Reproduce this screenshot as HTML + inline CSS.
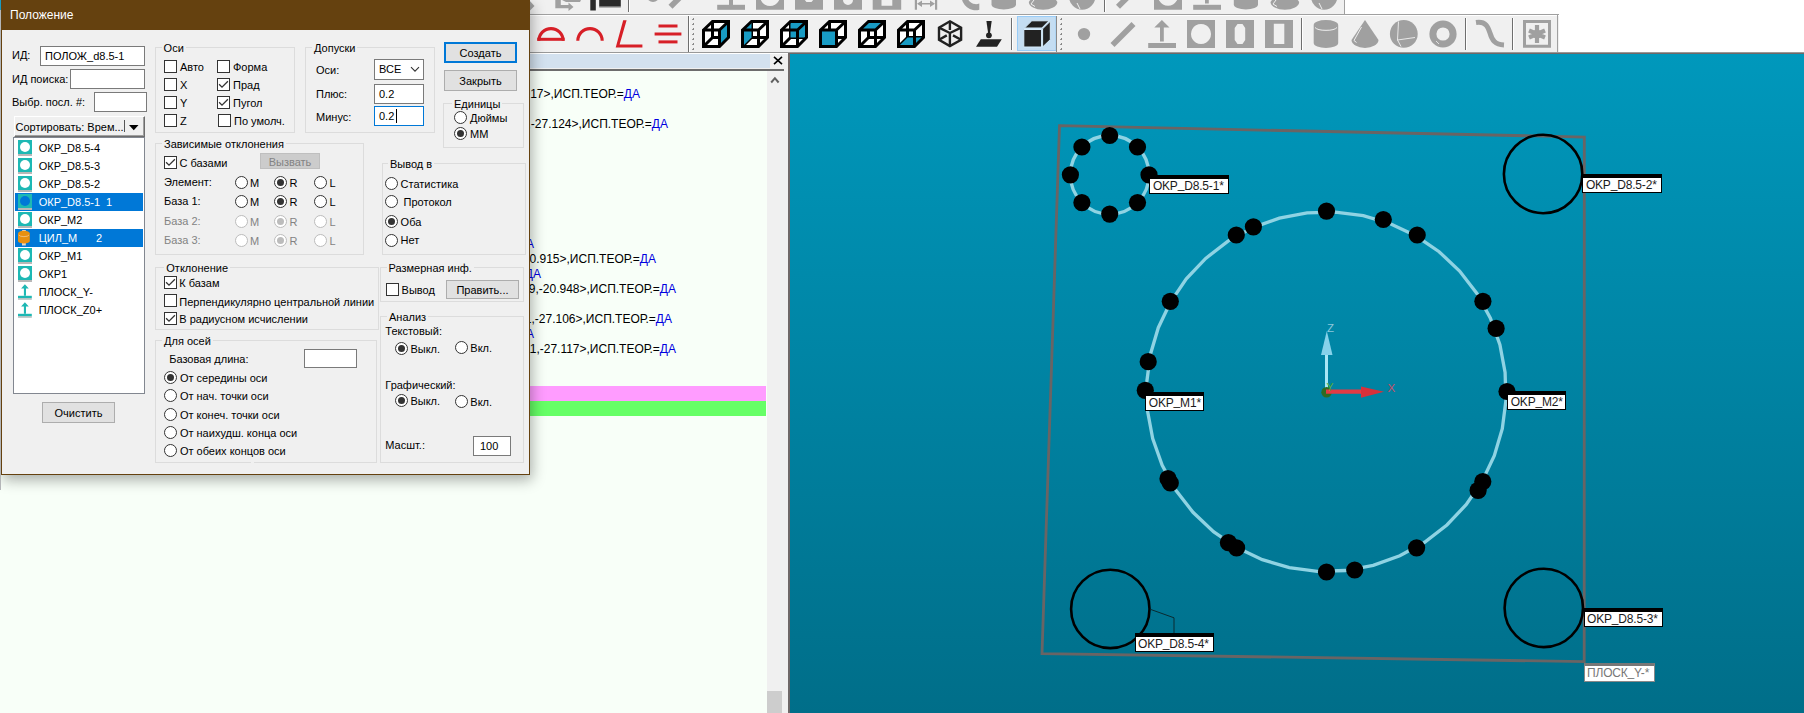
<!DOCTYPE html>
<html><head><meta charset="utf-8">
<style>
*{box-sizing:border-box;margin:0;padding:0}
html,body{width:1804px;height:713px;overflow:hidden;background:#fff;font-family:"Liberation Sans",sans-serif;font-size:11px;color:#000}
.a{position:absolute}
.t{position:absolute;white-space:nowrap;line-height:13px}
.gb{position:absolute;border:1px solid #dcdcdc}
.gl{position:absolute;white-space:nowrap;line-height:13px;background:#f0f0f0;padding:0 2px}
.inp{position:absolute;background:#fff;border:1px solid #7a7a7a}
.btn{position:absolute;background:#e1e1e1;border:1px solid #adadad;text-align:center;line-height:19px;padding-top:1px}
.cb{position:absolute;width:13px;height:13px;border:1px solid #333;background:#fff}
.rb{position:absolute;width:13px;height:13px;border:1px solid #333;background:#fff;border-radius:50%}
.rb.on::after{content:"";position:absolute;left:2px;top:2px;width:7px;height:7px;border-radius:50%;background:#333}
.rb.dis{border-color:#bcbcbc}
.rb.dis.on::after{background:#bcbcbc}
.dis{color:#838383}
.rpt{position:absolute;white-space:nowrap;font-size:12px;line-height:15px;text-align:right}
.da{color:#0000e0}
.lbl{position:absolute;background:#fff;border:1px solid #000;border-top:4px solid #000;font-size:12px;letter-spacing:-0.18px;line-height:13px;padding-left:2.5px;padding-top:1px;white-space:nowrap;color:#111}
</style></head><body>

<div class="a" style="left:0;top:0;width:1345px;height:14px;background:#f0f0f0"></div>
<div class="a" style="left:0;top:14px;width:1559px;height:1px;background:#a0a0a0"></div>
<div class="a" style="left:1344px;top:0;width:1px;height:14px;background:#a0a0a0"></div>
<div class="a" style="left:0;top:15px;width:1559px;height:38px;background:#f0f0f0;border-top:1px solid #fff"></div>
<div class="a" style="left:1557px;top:15px;width:1px;height:38px;background:#a0a0a0"></div>
<div class="a" style="left:0;top:52px;width:1804px;height:1px;background:#999"></div>
<svg class="a" style="left:0;top:0" width="1804" height="54" viewBox="0 0 1804 54">
<path d="M703.5 30 L712.5 21.5 H728.5 V37.5 L719.5 46.5 H703.5 Z" fill="#fff"/><path d="M712.5 21.5 V37.5 H728.5 M712.5 37.5 L703.5 46.5" fill="none" stroke="#000" stroke-width="3"/><path d="M719.5 30 L728.5 21.5 L728.5 37.5 L719.5 46.5 Z" fill="#189bc4"/><path d="M703.5 30 L712.5 21.5 H728.5 V37.5 L719.5 46.5 H703.5 Z M703.5 30 H719.5 V46.5 M719.5 30 L728.5 21.5" fill="none" stroke="#000" stroke-width="3" stroke-linejoin="miter"/>
<path d="M742.5 30 L751.5 21.5 H767.5 V37.5 L758.5 46.5 H742.5 Z" fill="#fff"/><path d="M751.5 21.5 V37.5 H767.5 M751.5 37.5 L742.5 46.5" fill="none" stroke="#000" stroke-width="3"/><path d="M742.5 30 L751.5 21.5 L751.5 37.5 L742.5 46.5 Z" fill="#189bc4"/><path d="M742.5 30 L751.5 21.5 H767.5 V37.5 L758.5 46.5 H742.5 Z M742.5 30 H758.5 V46.5 M758.5 30 L767.5 21.5" fill="none" stroke="#000" stroke-width="3" stroke-linejoin="miter"/>
<path d="M781.5 30 L790.5 21.5 H806.5 V37.5 L797.5 46.5 H781.5 Z" fill="#fff"/><path d="M790.5 21.5 V37.5 H806.5 M790.5 37.5 L781.5 46.5" fill="none" stroke="#000" stroke-width="3"/><path d="M790.5 21.5 H806.5 V37.5 H790.5 Z" fill="#189bc4"/><path d="M781.5 30 L790.5 21.5 H806.5 V37.5 L797.5 46.5 H781.5 Z M781.5 30 H797.5 V46.5 M797.5 30 L806.5 21.5" fill="none" stroke="#000" stroke-width="3" stroke-linejoin="miter"/>
<path d="M820.5 30 L829.5 21.5 H845.5 V37.5 L836.5 46.5 H820.5 Z" fill="#fff"/><path d="M829.5 21.5 V37.5 H845.5 M829.5 37.5 L820.5 46.5" fill="none" stroke="#000" stroke-width="3"/><path d="M820.5 30 H836.5 V46.5 H820.5 Z" fill="#189bc4"/><path d="M820.5 30 L829.5 21.5 H845.5 V37.5 L836.5 46.5 H820.5 Z M820.5 30 H836.5 V46.5 M836.5 30 L845.5 21.5" fill="none" stroke="#000" stroke-width="3" stroke-linejoin="miter"/>
<path d="M859.5 30 L868.5 21.5 H884.5 V37.5 L875.5 46.5 H859.5 Z" fill="#fff"/><path d="M868.5 21.5 V37.5 H884.5 M868.5 37.5 L859.5 46.5" fill="none" stroke="#000" stroke-width="3"/><path d="M859.5 30 L868.5 21.5 H884.5 L875.5 30 Z" fill="#189bc4"/><path d="M859.5 30 L868.5 21.5 H884.5 V37.5 L875.5 46.5 H859.5 Z M859.5 30 H875.5 V46.5 M875.5 30 L884.5 21.5" fill="none" stroke="#000" stroke-width="3" stroke-linejoin="miter"/>
<path d="M898.5 30 L907.5 21.5 H923.5 V37.5 L914.5 46.5 H898.5 Z" fill="#fff"/><path d="M907.5 21.5 V37.5 H923.5 M907.5 37.5 L898.5 46.5" fill="none" stroke="#000" stroke-width="3"/><path d="M898.5 46.5 L907.5 37.5 H923.5 L914.5 46.5 Z" fill="#189bc4"/><path d="M898.5 30 L907.5 21.5 H923.5 V37.5 L914.5 46.5 H898.5 Z M898.5 30 H914.5 V46.5 M914.5 30 L923.5 21.5" fill="none" stroke="#000" stroke-width="3" stroke-linejoin="miter"/>
<path d="M538.8 40.8 A12.2 12.2 0 0 1 563.2 40.8" fill="none" stroke="#d71f27" stroke-width="3.1"/><rect x="537.3" y="37.8" width="27.2" height="3" fill="#d71f27"/>
<path d="M577.8 40.8 A12.2 12.2 0 0 1 602.2 40.8" fill="none" stroke="#d71f27" stroke-width="3.1"/>
<path d="M623.2 20.2 L626.6 20.2 L619.6 44.6 L642.4 44.6 L642.4 47.4 L615.7 47.4 Z" fill="#d71f27"/>
<rect x="658.5" y="24.5" width="19" height="3" fill="#d71f27"/><rect x="654.6" y="32.5" width="26.8" height="3" fill="#d71f27"/><rect x="658.5" y="40.4" width="19" height="3" fill="#d71f27"/>
<rect x="688" y="16" width="1" height="36" fill="#6e6e6e"/><rect x="689" y="16" width="1" height="36" fill="#fff"/>
<rect x="692" y="19" width="2" height="1" fill="#999"/><rect x="693" y="18" width="1" height="2" fill="#888"/><rect x="692" y="24" width="2" height="1" fill="#999"/><rect x="693" y="23" width="1" height="2" fill="#888"/><rect x="692" y="29" width="2" height="1" fill="#999"/><rect x="693" y="28" width="1" height="2" fill="#888"/><rect x="692" y="34" width="2" height="1" fill="#999"/><rect x="693" y="33" width="1" height="2" fill="#888"/><rect x="692" y="39" width="2" height="1" fill="#999"/><rect x="693" y="38" width="1" height="2" fill="#888"/><rect x="692" y="44" width="2" height="1" fill="#999"/><rect x="693" y="43" width="1" height="2" fill="#888"/><rect x="692" y="49" width="2" height="1" fill="#999"/><rect x="693" y="48" width="1" height="2" fill="#888"/>
<rect x="628" y="0" width="1" height="12" fill="#6e6e6e"/><rect x="629" y="0" width="1" height="12" fill="#fff"/>
<g fill="none" stroke="#222" stroke-width="2.4" stroke-linejoin="miter"><path d="M949.9 21.3 L961.1 27.7 L961.1 39.8 L949.9 46 L939 39.8 L939 27.7 Z"/><path d="M939 27.7 L949.9 33 L961.1 27.7 M949.9 33 V46 M949.9 21.3 V30 M939 39.8 L946.8 35.4 M961.1 39.8 L953 35.4"/></g>
<path d="M986.4 21 H991.7 L990 33 H988.1 Z" fill="#222"/><circle cx="988.9" cy="35.3" r="2.9" fill="#222"/><path d="M976 46.7 L980.8 39.2 H1001.8 L997 46.7 Z" fill="#222"/>
<rect x="1011" y="18" width="1" height="32" fill="#6e6e6e"/><rect x="1012" y="18" width="1" height="32" fill="#fff"/>
<rect x="1017.5" y="16.5" width="38.5" height="34" fill="#c4ddf2" stroke="#99ccf7" stroke-width="1"/>
<rect x="1056" y="16" width="1" height="36" fill="#8a8a8a"/>
<g fill="#222" stroke="#d6ecfb" stroke-width="1"><path d="M1023.8 29.5 H1041.6 V47 H1023.8 Z"/><path d="M1024.5 28 L1031.8 20.8 H1049 L1041.8 28 Z"/><path d="M1042.6 28.8 L1050.3 21.2 V39.6 L1042.6 47 Z"/></g>
<rect x="1060" y="19" width="2" height="1" fill="#999"/><rect x="1061" y="18" width="1" height="2" fill="#888"/><rect x="1060" y="24" width="2" height="1" fill="#999"/><rect x="1061" y="23" width="1" height="2" fill="#888"/><rect x="1060" y="29" width="2" height="1" fill="#999"/><rect x="1061" y="28" width="1" height="2" fill="#888"/><rect x="1060" y="34" width="2" height="1" fill="#999"/><rect x="1061" y="33" width="1" height="2" fill="#888"/><rect x="1060" y="39" width="2" height="1" fill="#999"/><rect x="1061" y="38" width="1" height="2" fill="#888"/><rect x="1060" y="44" width="2" height="1" fill="#999"/><rect x="1061" y="43" width="1" height="2" fill="#888"/><rect x="1060" y="49" width="2" height="1" fill="#999"/><rect x="1061" y="48" width="1" height="2" fill="#888"/>
<g transform="translate(0,0)" fill="#a0a0a0"><circle cx="1084" cy="34.1" r="6.2"/><path d="M1110.5 43 L1131.5 22 L1135.5 26 L1114.5 47 Z"/><path d="M1161.9 20 L1169.5 27.4 H1163.8 V41.6 H1160 V27.4 H1154.3 Z"/><rect x="1148.2" y="43" width="27.8" height="5"/><path fill-rule="evenodd" d="M1187 20 H1215 V48 H1187 Z M1201 24 A10 10 0 1 0 1201.01 24 Z"/><path fill-rule="evenodd" d="M1226 20 H1254 V48 H1226 Z M1237.5 24.1 H1242.5 L1245.2 28 V40 L1242.5 44.1 H1237.5 L1234.7 40 V28 Z"/><path fill-rule="evenodd" d="M1265 20 H1293 V48 H1265 Z M1273.8 23.8 H1284.3 V44.1 H1273.8 Z"/></g>
<g fill="#a0a0a0"><circle cx="653" cy="-4.1" r="6.2"/><path d="M668.5 4.8 L689.5 -16.2 L693.5 -12.2 L672.5 8.8 Z"/><path d="M729 -6 H733 V5 H729 Z"/><rect x="717.2" y="4.8" width="27.8" height="5"/><path fill-rule="evenodd" d="M756 -18 H784 V9.7 H756 Z M770 -14 A10 10 0 1 0 770.01 -14 Z"/><path fill-rule="evenodd" d="M795 -18 H823 V9.7 H795 Z M804 -14 H814 V-1 L811.5 2 H806.5 L804 -1 Z"/><path fill-rule="evenodd" d="M834 -18 H862 V9.7 H834 Z M843 -14 H853 V0 A5 5 0 0 1 843 0 Z"/></g>
<rect x="1301" y="18" width="1" height="32" fill="#6e6e6e"/><rect x="1302" y="18" width="1" height="32" fill="#fff"/>
<g fill="#a0a0a0"><path d="M1313.7 25 A12.25 5 0 0 1 1338.2 25 V43 A12.25 5 0 0 1 1313.7 43 Z"/></g>
<path d="M1315 27.5 A11.5 4 0 0 0 1337 27.5" fill="none" stroke="#f0f0f0" stroke-width="1"/>
<path d="M1365 20 L1378.5 40 A13.5 7.9 0 0 1 1351.5 40 Z" fill="#a0a0a0"/><path d="M1361.5 27 L1354 40.5 L1356.5 42.5" fill="none" stroke="#f0f0f0" stroke-width="1"/>
<circle cx="1403.8" cy="33.9" r="13.9" fill="#a0a0a0"/><path d="M1398.5 21.5 L1397.5 40 L1415 37.5 M1397.5 40 L1401 46.5" fill="none" stroke="#f0f0f0" stroke-width="0.9"/>
<circle cx="1443" cy="34" r="10.1" fill="none" stroke="#a0a0a0" stroke-width="7"/><path d="M1436 41 L1439 44" stroke="#f0f0f0" stroke-width="0.8"/>
<rect x="1465" y="18" width="1" height="32" fill="#6e6e6e"/><rect x="1466" y="18" width="1" height="32" fill="#fff"/>
<path d="M1476 22.5 C1486 21 1488 27 1490 33 C1492 40 1495 44.5 1504 45" fill="none" stroke="#a0a0a0" stroke-width="5"/>
<rect x="1512" y="18" width="1" height="32" fill="#6e6e6e"/><rect x="1513" y="18" width="1" height="32" fill="#fff"/>
<path fill-rule="evenodd" d="M1523 20 H1551 V47.7 H1523 Z M1526 23 V44.7 H1548 V23 Z" fill="#a0a0a0"/>
<g stroke="#a0a0a0" stroke-width="4.2"><path d="M1537 25 V43"/><path d="M1529 30.5 L1545 37.5 M1545 30.5 L1529 37.5"/></g><circle cx="1537" cy="34" r="4.5" fill="#a0a0a0"/>
<g fill="#a0a0a0"><path d="M529 0 L534.5 6 L529 11.5 Z"/><path d="M555.3 0 H560.8 V5 H568.5 V2.5 L573.5 7 L568.5 11 V8.3 H555.3 Z"/><path d="M563 0 H581 L580 2 H566 L562 0 Z"/><path fill-rule="evenodd" d="M872.7 -18 H901.2 V9.7 H872.7 Z M881.5 -10 H892.3 V5.8 H881.5 Z"/><path d="M914.8 -2 H917 V9.7 H914.8 Z M935 -2 H937.2 V9.7 H935 Z M917 3.8 L922 0.5 V3 H930 V0.5 L935 3.8 L930 7 V4.6 H922 V7 Z"/><path d="M961.6 -4 A14 14 0 0 0 979.3 9.7 V3.5 A9 9 0 0 1 967 -4 Z"/><path d="M991.5 -10 V4.5 A12.25 5 0 0 0 1016 4.5 V-10 Z"/><path d="M1028.8 2 A14.3 7.7 0 0 0 1057.4 2 L1043 -18 Z"/><circle cx="1082.2" cy="-3.5" r="13.2"/></g>
<path d="M1034 0 L1031 4 L1035 6.5" fill="none" stroke="#f0f0f0" stroke-width="1"/><path d="M1072 -1 L1092 -1 M1077 3 L1080 9" fill="none" stroke="#f0f0f0" stroke-width="1"/>
<g fill="#a0a0a0"><path d="M1233.8 -10 V4.5 A12.1 5 0 0 0 1258 4.5 V-10 Z"/><path d="M1270.5 2 A14.35 7.7 0 0 0 1299.2 2 L1285 -18 Z"/><circle cx="1324.2" cy="-3.5" r="13.2"/></g>
<path d="M1276 0 L1273 4 L1277 6.5" fill="none" stroke="#f0f0f0" stroke-width="1"/><path d="M1314 -1 L1334 -1 M1319 3 L1322 9" fill="none" stroke="#f0f0f0" stroke-width="1"/>
<rect x="1104" y="0" width="1" height="12" fill="#6e6e6e"/><rect x="1105" y="0" width="1" height="12" fill="#fff"/>
<g fill="#a0a0a0"><g transform="translate(5.5,-38.2)"><path d="M1110.5 43 L1131.5 22 L1135.5 26 L1114.5 47 Z"/></g><g transform="translate(-33,-38.2)"><path fill-rule="evenodd" d="M1187 20 H1215 V48 H1187 Z M1201 24 A10 10 0 1 0 1201.01 24 Z"/></g><g transform="translate(45,-38.2)"><path d="M1161.9 20 L1169.5 27.4 H1163.8 V41.6 H1160 V27.4 H1154.3 Z"/><rect x="1148.2" y="43" width="27.8" height="5"/></g></g>
<rect x="590.3" y="0" width="5.5" height="10.5" fill="#2a2a2a"/><rect x="599.2" y="0" width="21.6" height="6.7" fill="#2a2a2a"/><rect x="599.2" y="6.7" width="21.6" height="1" fill="#999"/>
</svg>
<div class="a" style="left:0;top:53px;width:790px;height:660px;background:#f0f0f0;border-top:1px solid #fff"></div>
<div class="a" style="left:0;top:54px;width:770px;height:14px;background:#d3e1ef"></div>
<div class="a" style="left:0;top:69px;width:784px;height:2px;background:#6d6d6d"></div>
<div class="a" style="left:0;top:71px;width:767px;height:642px;background:#f8fff8"></div>
<div class="a" style="left:788px;top:53px;width:1016px;height:660px;background:#6f6868"></div>
<svg class="a" style="left:773px;top:56px" width="10" height="9"><path d="M1 0.8 L9 8.2 M9 0.8 L1 8.2" stroke="#000" stroke-width="1.6"/></svg>
<svg class="a" style="left:770px;top:76px" width="10" height="8"><path d="M1.2 6.5 L4.9 2.2 L8.6 6.5" fill="none" stroke="#606060" stroke-width="2"/></svg>
<div class="a" style="left:767px;top:691px;width:15px;height:22px;background:#cdcdcd"></div>
<div class="rpt" style="right:1164px;top:87.3px">ИСП.ТЕОР.=ИСП.ТЕОР.=<0.000,-20.917>,ИСП.ТЕОР.=<span class="da">ДА</span></div>
<div class="rpt" style="right:1136px;top:117.3px"><0.000,-20.917>,<0.000,-27.124>,ИСП.ТЕОР.=<span class="da">ДА</span></div>
<div class="rpt" style="right:1270px;top:237.3px">ИСП.ТЕОР.=<span class="da">ДА</span></div>
<div class="rpt" style="right:1148px;top:252.3px">ИСП.ТЕОР.=<0.000,-20.915>,ИСП.ТЕОР.=<span class="da">ДА</span></div>
<div class="rpt" style="right:1263px;top:267.3px">ИСП.ТЕОР.=<span class="da">ДА</span></div>
<div class="rpt" style="right:1128px;top:282.3px">ИСП.ТЕОР.=<0.000,-26.919,-20.948>,ИСП.ТЕОР.=<span class="da">ДА</span></div>
<div class="rpt" style="right:1132px;top:312.3px">ИСП.ТЕОР.=<0.000,-26.911,-27.106>,ИСП.ТЕОР.=<span class="da">ДА</span></div>
<div class="rpt" style="right:1270px;top:327.3px">ИСП.ТЕОР.=<span class="da">ДА</span></div>
<div class="rpt" style="right:1128px;top:342.3px">ИСП.ТЕОР.=<0.000,-26.911,-27.117>,ИСП.ТЕОР.=<span class="da">ДА</span></div>
<div class="a" style="left:0;top:386px;width:766px;height:14.5px;background:#ff9cff"></div>
<div class="a" style="left:0;top:400.5px;width:766px;height:15.5px;background:#66ff66"></div>
<div class="a" style="left:790px;top:54px;width:1014px;height:659px;background:linear-gradient(#0098bc,#006e89)"></div>
<svg class="a" style="left:0;top:0" width="1804" height="713" viewBox="0 0 1804 713">
<path d="M1059.5 125.7 L1584.3 137 L1584.2 661.6 L1042 653.6 Z" fill="none" stroke="#6a6464" stroke-width="2.8" stroke-linejoin="miter"/>
<polygon points="1505.9,400.7 1502.3,428.7 1494.3,455.7 1482.2,481.2 1466.3,504.5 1446.9,525.0 1424.6,542.3 1399.8,555.8 1373.2,565.3 1345.5,570.5 1317.3,571.3 1289.3,567.7 1262.3,559.7 1236.8,547.6 1213.5,531.7 1193.0,512.3 1175.7,490.0 1162.2,465.2 1152.7,438.6 1147.5,410.9 1146.7,382.7 1150.3,354.7 1158.3,327.7 1170.4,302.2 1186.3,278.9 1205.7,258.4 1228.0,241.1 1252.8,227.6 1279.4,218.1 1307.1,212.9 1335.3,212.1 1363.3,215.7 1390.3,223.7 1415.8,235.8 1439.1,251.7 1459.6,271.1 1476.9,293.4 1490.4,318.2 1499.9,344.8 1505.1,372.5" fill="none" stroke="#8fd3e3" stroke-width="3.3"/>
<circle cx="1109.7" cy="174.8" r="39.3" fill="none" stroke="#8fd3e3" stroke-width="3.3"/>
<circle cx="1543.1" cy="174" r="39.2" fill="none" stroke="#000" stroke-width="2.6"/>
<circle cx="1110.3" cy="608.9" r="39.2" fill="none" stroke="#000" stroke-width="2.6"/>
<circle cx="1543.8" cy="607.9" r="39.2" fill="none" stroke="#000" stroke-width="2.6"/>
<path d="M1150.3 609.3 L1174 617.8 L1174 633" fill="none" stroke="#0a2a30" stroke-width="1"/>
<circle cx="1326.5" cy="211.1" r="8.6" fill="#000"/>
<circle cx="1383.3" cy="219.5" r="8.6" fill="#000"/>
<circle cx="1417.2" cy="235" r="8.6" fill="#000"/>
<circle cx="1482.9" cy="301.3" r="8.6" fill="#000"/>
<circle cx="1496.1" cy="328.4" r="8.6" fill="#000"/>
<circle cx="1507" cy="391.5" r="8.6" fill="#000"/>
<circle cx="1482.8" cy="481.6" r="8.6" fill="#000"/>
<circle cx="1478.1" cy="490.4" r="8.6" fill="#000"/>
<circle cx="1416.6" cy="547.8" r="8.6" fill="#000"/>
<circle cx="1354.7" cy="570" r="8.6" fill="#000"/>
<circle cx="1326.5" cy="572" r="8.6" fill="#000"/>
<circle cx="1236.6" cy="547.9" r="8.6" fill="#000"/>
<circle cx="1228.4" cy="542.6" r="8.6" fill="#000"/>
<circle cx="1170.3" cy="483" r="8.6" fill="#000"/>
<circle cx="1168" cy="478.7" r="8.6" fill="#000"/>
<circle cx="1145.3" cy="390.3" r="8.6" fill="#000"/>
<circle cx="1148.2" cy="361.7" r="8.6" fill="#000"/>
<circle cx="1170.3" cy="301.3" r="8.6" fill="#000"/>
<circle cx="1236.3" cy="235" r="8.6" fill="#000"/>
<circle cx="1253.4" cy="226.8" r="8.6" fill="#000"/>
<circle cx="1149.0" cy="174.8" r="8.6" fill="#000"/>
<circle cx="1137.5" cy="202.6" r="8.6" fill="#000"/>
<circle cx="1109.7" cy="214.1" r="8.6" fill="#000"/>
<circle cx="1081.9" cy="202.6" r="8.6" fill="#000"/>
<circle cx="1070.4" cy="174.8" r="8.6" fill="#000"/>
<circle cx="1081.9" cy="147.0" r="8.6" fill="#000"/>
<circle cx="1109.7" cy="135.5" r="8.6" fill="#000"/>
<circle cx="1137.5" cy="147.0" r="8.6" fill="#000"/>
<line x1="1326.5" y1="392" x2="1326.5" y2="352" stroke="#a8e6f5" stroke-width="3"/>
<path d="M1326.8 331 L1332.5 355 L1321 355 Z" fill="#86d2ea"/>
<circle cx="1326.6" cy="392.3" r="5.3" fill="#2f6a22"/>
<line x1="1326" y1="391.6" x2="1362" y2="391.6" stroke="#e33a44" stroke-width="4.2"/>
<path d="M1384 391.8 L1361 386.4 L1361 397.7 Z" fill="#d8303a"/>
<text x="1327" y="331.5" font-family="Liberation Sans" font-size="11.5" fill="#8cc8dc">Z</text>
<text x="1387.5" y="392" font-family="Liberation Sans" font-size="11.5" fill="#c85068">X</text>
<text x="1326.5" y="391" font-family="Liberation Sans" font-size="10.5" fill="#5cb030">Y</text>
</svg>
<div class="lbl" style="left:1149.4px;top:174.8px;width:79.2px;height:19px;border-color:#000;border-top:4px solid #000;color:#1a1a1a">OKP<span style="position:relative;top:-1.5px">_</span>D8.5-1*</div>
<div class="lbl" style="left:1582.4px;top:174px;width:79.2px;height:19px;border-color:#000;border-top:4px solid #000;color:#1a1a1a">OKP<span style="position:relative;top:-1.5px">_</span>D8.5-2*</div>
<div class="lbl" style="left:1134.5px;top:633px;width:79.2px;height:19px;border-color:#000;border-top:4px solid #000;color:#1a1a1a">OKP<span style="position:relative;top:-1.5px">_</span>D8.5-4*</div>
<div class="lbl" style="left:1583.5px;top:608.3px;width:79px;height:19px;border-color:#000;border-top:4px solid #000;color:#1a1a1a">OKP<span style="position:relative;top:-1.5px">_</span>D8.5-3*</div>
<div class="lbl" style="left:1583.5px;top:663px;width:71px;height:19px;border-color:#888;border-top:3px solid #777;color:#777">ПЛОСК<span style="position:relative;top:-1.5px">_</span>Y-*</div>
<div class="lbl" style="left:1145.3px;top:391.5px;width:58.6px;height:19px;border-color:#000;border-top:4px solid #000;color:#1a1a1a">OKP<span style="position:relative;top:-1.5px">_</span>M1*</div>
<div class="lbl" style="left:1507.2px;top:391.1px;width:58.6px;height:19px;border-color:#000;border-top:4px solid #000;color:#1a1a1a">OKP<span style="position:relative;top:-1.5px">_</span>M2*</div>
<div class="a" style="left:1px;top:0;width:529px;height:475px;background:#f0f0f0;border:1px solid #65410f;box-shadow:2px 5px 13px rgba(0,0,0,0.32)"></div>
<div class="a" style="left:1px;top:0;width:529px;height:30px;background:#65410f"></div>
<div class="t" style="left:10px;top:8px;font-size:12px;color:#fff;line-height:14px">Положение</div>
<div class="t " style="left:12px;top:49px;">ИД:</div>
<div class="t " style="left:12px;top:73px;">ИД поиска:</div>
<div class="t " style="left:12px;top:96px;">Выбр. посл. #:</div>
<div class="inp" style="left:40px;top:46px;width:105px;height:20px"></div>
<div class="t " style="left:45px;top:50px;">ПОЛОЖ_d8.5-1</div>
<div class="inp" style="left:70px;top:69px;width:75px;height:20px"></div>
<div class="inp" style="left:94px;top:92px;width:53px;height:20px"></div>
<div class="a" style="left:14px;top:116px;width:131px;height:21px;background:#f0f0f0;border:1px solid;border-color:#fff #6d6d6d #6d6d6d #fff;box-shadow:inset -1px -1px 0 #a0a0a0"></div>
<div class="t " style="left:15.5px;top:121px;">Сортировать: Врем...</div>
<div class="a" style="left:124px;top:120px;width:1px;height:12px;background:#555"></div>
<svg class="a" style="left:129px;top:125px" width="10" height="6"><path d="M0 0 H9.5 L4.75 5.2 Z" fill="#000"/></svg>
<div class="a" style="left:13px;top:137px;width:132px;height:257px;background:#fff;border:1px solid #828790"></div>
<svg class="a" style="left:18px;top:140px" width="14" height="16"><rect x="0" y="0" width="14" height="14" fill="#1eb8b4"/><rect x="0" y="14" width="14" height="2" fill="#b8b8b8"/><circle cx="7" cy="7" r="5" fill="#fff"/></svg>
<div class="t " style="left:38.7px;top:142px;color:#000">ОКР_D8.5-4</div>
<svg class="a" style="left:18px;top:158px" width="14" height="16"><rect x="0" y="0" width="14" height="14" fill="#1eb8b4"/><rect x="0" y="14" width="14" height="2" fill="#b8b8b8"/><circle cx="7" cy="7" r="5" fill="#fff"/></svg>
<div class="t " style="left:38.7px;top:160px;color:#000">ОКР_D8.5-3</div>
<svg class="a" style="left:18px;top:176px" width="14" height="16"><rect x="0" y="0" width="14" height="14" fill="#1eb8b4"/><rect x="0" y="14" width="14" height="2" fill="#b8b8b8"/><circle cx="7" cy="7" r="5" fill="#fff"/></svg>
<div class="t " style="left:38.7px;top:178px;color:#000">ОКР_D8.5-2</div>
<div class="a" style="left:15px;top:193px;width:128px;height:18px;background:#0078d7"></div>
<svg class="a" style="left:18px;top:194px" width="14" height="16"><rect x="0" y="0" width="14" height="14" fill="#1eb8b4"/><rect x="0" y="14" width="14" height="2" fill="#b8b8b8"/><circle cx="7" cy="7" r="5" fill="#0078d7"/></svg>
<div class="t " style="left:38.7px;top:196px;color:#fff">ОКР_D8.5-1</div>
<div class="t " style="left:106px;top:196px;color:#fff">1</div>
<svg class="a" style="left:18px;top:212px" width="14" height="16"><rect x="0" y="0" width="14" height="14" fill="#1eb8b4"/><rect x="0" y="14" width="14" height="2" fill="#b8b8b8"/><circle cx="7" cy="7" r="5" fill="#fff"/></svg>
<div class="t " style="left:38.7px;top:214px;color:#000">ОКР_М2</div>
<div class="a" style="left:15px;top:229px;width:128px;height:18px;background:#0078d7"></div>
<svg class="a" style="left:18px;top:230px" width="14" height="17"><rect x="4" y="13" width="3.8" height="2.5" fill="#e8d8c0"/><rect x="4.2" y="0" width="3.6" height="1.5" fill="#e8d8c0"/><path d="M0 3.5 A5.9 2.8 0 0 1 11.8 3.5 V11 A5.9 2.6 0 0 1 0 11 Z" fill="#e8900f"/><path d="M0.8 5 A5.2 2 0 0 0 11 5" fill="none" stroke="#f4c890" stroke-width="0.8"/></svg>
<div class="t " style="left:38.7px;top:232px;color:#fff">ЦИЛ_М</div>
<div class="t " style="left:96px;top:232px;color:#fff">2</div>
<svg class="a" style="left:18px;top:248px" width="14" height="16"><rect x="0" y="0" width="14" height="14" fill="#1eb8b4"/><rect x="0" y="14" width="14" height="2" fill="#b8b8b8"/><circle cx="7" cy="7" r="5" fill="#fff"/></svg>
<div class="t " style="left:38.7px;top:250px;color:#000">ОКР_М1</div>
<svg class="a" style="left:18px;top:266px" width="14" height="16"><rect x="0" y="0" width="14" height="14" fill="#1eb8b4"/><rect x="0" y="14" width="14" height="2" fill="#b8b8b8"/><circle cx="7" cy="7" r="5" fill="#fff"/></svg>
<div class="t " style="left:38.7px;top:268px;color:#000">ОКР1</div>
<svg class="a" style="left:18px;top:284px" width="14" height="16"><path d="M6.9 0.2 L10.8 4.4 H8 V11.8 H5.9 V4.4 H3.1 Z" fill="#1eb8b4"/><rect x="0" y="11.8" width="13.8" height="2.4" fill="#1eb8b4"/><rect x="0" y="14.2" width="13.8" height="1.5" fill="#a8b8b8"/></svg>
<div class="t " style="left:38.7px;top:286px;color:#000">ПЛОСК_Y-</div>
<svg class="a" style="left:18px;top:302px" width="14" height="16"><path d="M6.9 0.2 L10.8 4.4 H8 V11.8 H5.9 V4.4 H3.1 Z" fill="#1eb8b4"/><rect x="0" y="11.8" width="13.8" height="2.4" fill="#1eb8b4"/><rect x="0" y="14.2" width="13.8" height="1.5" fill="#a8b8b8"/></svg>
<div class="t " style="left:38.7px;top:304px;color:#000">ПЛОСК_Z0+</div>
<div class="btn" style="left:42px;top:402px;width:73px;height:21px">Очистить</div>
<div class="gb" style="left:155px;top:47px;width:140px;height:86px"></div>
<div class="gl" style="left:161.6px;top:42px">Оси</div>
<div class="cb" style="left:164px;top:60px"></div>
<div class="t " style="left:180px;top:61px;">Авто</div>
<div class="cb" style="left:217px;top:60px"></div>
<div class="t " style="left:233px;top:61px;">Форма</div>
<div class="cb" style="left:164px;top:78px"></div>
<div class="t " style="left:180px;top:79px;">X</div>
<div class="cb" style="left:217px;top:78px"><svg class="a" style="left:0;top:0" width="11" height="11"><path d="M1.1 5.3 L4 8.2 L9.9 2.3" stroke="#333" stroke-width="1.3" fill="none"/></svg></div>
<div class="t " style="left:233px;top:79px;">Прад</div>
<div class="cb" style="left:164px;top:96px"></div>
<div class="t " style="left:180px;top:97px;">Y</div>
<div class="cb" style="left:217px;top:96px"><svg class="a" style="left:0;top:0" width="11" height="11"><path d="M1.1 5.3 L4 8.2 L9.9 2.3" stroke="#333" stroke-width="1.3" fill="none"/></svg></div>
<div class="t " style="left:233px;top:97px;">Пугол</div>
<div class="cb" style="left:164px;top:114px"></div>
<div class="t " style="left:180px;top:115px;">Z</div>
<div class="cb" style="left:218px;top:114px"></div>
<div class="t " style="left:234px;top:115px;">По умолч.</div>
<div class="gb" style="left:305px;top:47px;width:130px;height:86px"></div>
<div class="gl" style="left:312px;top:42px">Допуски</div>
<div class="t " style="left:316px;top:64px;">Оси:</div>
<div class="t " style="left:316px;top:88px;">Плюс:</div>
<div class="t " style="left:316px;top:111px;">Минус:</div>
<div class="inp" style="left:374px;top:59px;width:50px;height:21px"></div>
<div class="t " style="left:379px;top:63px;">ВСЕ</div>
<svg class="a" style="left:410px;top:66px" width="10" height="7"><path d="M1 1.2 L5 5.2 L9 1.2" stroke="#333" stroke-width="1.1" fill="none"/></svg>
<div class="inp" style="left:374px;top:84px;width:50px;height:20px"></div>
<div class="t " style="left:379px;top:88px;">0.2</div>
<div class="inp" style="left:374px;top:106px;width:50px;height:20px;border-color:#0078d7"></div>
<div class="t " style="left:379px;top:110px;">0.2</div>
<div class="a" style="left:396px;top:109px;width:1px;height:14px;background:#000"></div>
<div class="btn" style="left:444px;top:42px;width:73px;height:21px;border:2px solid #0078d7;line-height:17px">Создать</div>
<div class="btn" style="left:444px;top:70px;width:73px;height:21px">Закрыть</div>
<div class="gb" style="left:443px;top:103px;width:81px;height:45px"></div>
<div class="gl" style="left:452px;top:98px">Единицы</div>
<div class="rb" style="left:454px;top:111px"></div>
<div class="t " style="left:470px;top:112px;">Дюймы</div>
<div class="rb on" style="left:454px;top:127px"></div>
<div class="t " style="left:470px;top:128px;">ММ</div>
<div class="gb" style="left:155px;top:143px;width:209px;height:112px"></div>
<div class="gl" style="left:162px;top:138px">Зависимые отклонения</div>
<div class="cb" style="left:164px;top:156px"><svg class="a" style="left:0;top:0" width="11" height="11"><path d="M1.1 5.3 L4 8.2 L9.9 2.3" stroke="#333" stroke-width="1.3" fill="none"/></svg></div>
<div class="t " style="left:179.5px;top:157px;">С базами</div>
<div class="btn" style="left:260px;top:153px;width:60px;height:16px;background:#ccc;border-color:#bfbfbf;color:#838383;line-height:14px">Вызвать</div>
<div class="t " style="left:164px;top:176px;">Элемент:</div>
<div class="rb" style="left:235px;top:176px"></div>
<div class="t " style="left:250px;top:177px;">M</div>
<div class="rb on" style="left:274px;top:176px"></div>
<div class="t " style="left:289.5px;top:177px;">R</div>
<div class="rb" style="left:314px;top:176px"></div>
<div class="t " style="left:329.5px;top:177px;">L</div>
<div class="t " style="left:164px;top:195px;">База 1:</div>
<div class="rb" style="left:235px;top:195px"></div>
<div class="t " style="left:250px;top:196px;">M</div>
<div class="rb on" style="left:274px;top:195px"></div>
<div class="t " style="left:289.5px;top:196px;">R</div>
<div class="rb" style="left:314px;top:195px"></div>
<div class="t " style="left:329.5px;top:196px;">L</div>
<div class="t dis" style="left:164px;top:215px;">База 2:</div>
<div class="rb dis" style="left:235px;top:215px"></div>
<div class="t dis" style="left:250px;top:216px;">M</div>
<div class="rb on dis" style="left:274px;top:215px"></div>
<div class="t dis" style="left:289.5px;top:216px;">R</div>
<div class="rb dis" style="left:314px;top:215px"></div>
<div class="t dis" style="left:329.5px;top:216px;">L</div>
<div class="t dis" style="left:164px;top:234px;">База 3:</div>
<div class="rb dis" style="left:235px;top:234px"></div>
<div class="t dis" style="left:250px;top:235px;">M</div>
<div class="rb on dis" style="left:274px;top:234px"></div>
<div class="t dis" style="left:289.5px;top:235px;">R</div>
<div class="rb dis" style="left:314px;top:234px"></div>
<div class="t dis" style="left:329.5px;top:235px;">L</div>
<div class="gb" style="left:382px;top:163px;width:144px;height:92px"></div>
<div class="gl" style="left:388px;top:158px">Вывод в</div>
<div class="rb" style="left:385px;top:177px"></div>
<div class="t " style="left:400.6px;top:178px;">Статистика</div>
<div class="rb" style="left:385px;top:195px"></div>
<div class="t " style="left:403.6px;top:196px;">Протокол</div>
<div class="rb on" style="left:385px;top:215px"></div>
<div class="t " style="left:400.6px;top:216px;">Оба</div>
<div class="rb" style="left:385px;top:234px"></div>
<div class="t " style="left:400.6px;top:234px;">Нет</div>
<div class="gb" style="left:155px;top:267px;width:224px;height:63px"></div>
<div class="gl" style="left:164.3px;top:262px">Отклонение</div>
<div class="cb" style="left:164px;top:276px"><svg class="a" style="left:0;top:0" width="11" height="11"><path d="M1.1 5.3 L4 8.2 L9.9 2.3" stroke="#333" stroke-width="1.3" fill="none"/></svg></div>
<div class="t " style="left:179.3px;top:277px;">К базам</div>
<div class="cb" style="left:164px;top:294px"></div>
<div class="t " style="left:179.3px;top:296px;">Перпендикулярно центральной линии</div>
<div class="cb" style="left:164px;top:312px"><svg class="a" style="left:0;top:0" width="11" height="11"><path d="M1.1 5.3 L4 8.2 L9.9 2.3" stroke="#333" stroke-width="1.3" fill="none"/></svg></div>
<div class="t " style="left:179.3px;top:313px;">В радиусном исчислении</div>
<div class="gb" style="left:380px;top:267px;width:144px;height:35px"></div>
<div class="gl" style="left:386.5px;top:262px">Размерная инф.</div>
<div class="cb" style="left:386px;top:283px"></div>
<div class="t " style="left:401.6px;top:284px;">Вывод</div>
<div class="btn" style="left:446px;top:280px;width:73px;height:19px;line-height:17px">Править...</div>
<div class="gb" style="left:380px;top:316px;width:144px;height:147px"></div>
<div class="gl" style="left:387px;top:311px">Анализ</div>
<div class="t " style="left:385.3px;top:325px;">Текстовый:</div>
<div class="rb on" style="left:395px;top:342px"></div>
<div class="t " style="left:410.4px;top:343px;">Выкл.</div>
<div class="rb" style="left:455px;top:341px"></div>
<div class="t " style="left:470.3px;top:342px;">Вкл.</div>
<div class="t " style="left:385.3px;top:379px;">Графический:</div>
<div class="rb on" style="left:395px;top:394px"></div>
<div class="t " style="left:410.4px;top:395px;">Выкл.</div>
<div class="rb" style="left:455px;top:395px"></div>
<div class="t " style="left:470.3px;top:396px;">Вкл.</div>
<div class="t " style="left:385.3px;top:439px;">Масшт.:</div>
<div class="inp" style="left:473px;top:436px;width:38px;height:20px"></div>
<div class="t " style="left:480px;top:440px;">100</div>
<div class="gb" style="left:155px;top:340px;width:222px;height:123px"></div>
<div class="gl" style="left:162.1px;top:335px">Для осей</div>
<div class="t " style="left:169.2px;top:353px;">Базовая длина:</div>
<div class="inp" style="left:304px;top:349px;width:53px;height:19px"></div>
<div class="rb on" style="left:164px;top:371px"></div>
<div class="t " style="left:179.9px;top:372px;">От середины оси</div>
<div class="rb" style="left:164px;top:389px"></div>
<div class="t " style="left:179.9px;top:390px;">От нач. точки оси</div>
<div class="rb" style="left:164px;top:408px"></div>
<div class="t " style="left:179.9px;top:409px;">От конеч. точки оси</div>
<div class="rb" style="left:164px;top:426px"></div>
<div class="t " style="left:179.9px;top:427px;">От наихудш. конца оси</div>
<div class="rb" style="left:164px;top:444px"></div>
<div class="t " style="left:179.9px;top:445px;">От обеих концов оси</div>
<div class="a" style="left:251px;top:460px;width:3px;height:3px;background:#f0f0f0"></div>
<div class="a" style="left:0;top:0;width:1px;height:10px;background:#1a9ac0"></div><div class="a" style="left:0;top:10px;width:1px;height:480px;background:#b4b6b8"></div>
</body></html>
